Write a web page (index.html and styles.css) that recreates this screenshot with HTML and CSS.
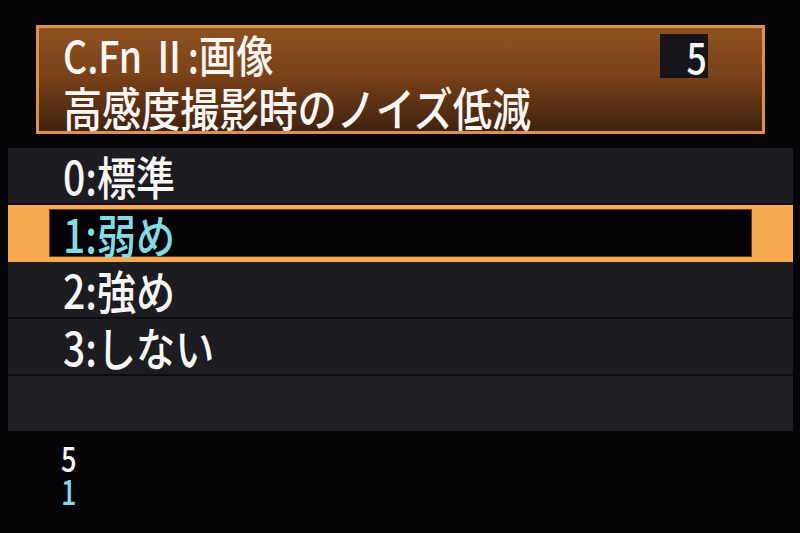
FILE: index.html
```html
<!DOCTYPE html>
<html lang="ja">
<head>
<meta charset="utf-8">
<link rel="stylesheet" href="styles.css">
</head>
<body>
<div class="screen">
  <div class="header">
    <div class="hline1">
      <span class="txt">C.Fn Ⅱ:画像</span>
      <span class="numbox"><span class="num">5</span></span>
    </div>
    <div class="hline2"><span class="txt">高感度撮影時のノイズ低減</span></div>
  </div>
  <div class="list">
    <div class="row"><span class="txt">0:標準</span></div>
    <div class="row selected"><div class="inner"><span class="txt">1:弱め</span></div></div>
    <div class="row"><span class="txt">2:強め</span></div>
    <div class="row"><span class="txt">3:しない</span></div>
    <div class="row empty"></div>
  </div>
  <div class="footer">
    <span class="fnum">5</span>
    <span class="fnum cyan">1</span>
  </div>
</div>
</body>
</html>
```
FILE: styles.css
```css
html, body {
  margin: 0;
  padding: 0;
  background: #050508;
  width: 800px;
  height: 533px;
  overflow: hidden;
}
.screen {
  font-family: "Noto Sans CJK JP", "Noto Sans", sans-serif;
  font-weight: 500;
  color: #f8f6f4;
  display: flex;
  flex-direction: column;
  padding-top: 25px;
}
.txt {
  display: inline-block;
  transform: scaleX(0.85);
  transform-origin: left center;
  white-space: nowrap;
}
.header {
  margin-left: 36px;
  width: 729px;
  height: 109px;
  box-sizing: border-box;
  border: 3px solid #de9247;
  background: linear-gradient(180deg, #8e5122 0%, #7a4219 45%, #40220f 100%);
  padding: 0 0 0 24px;
  display: flex;
  flex-direction: column;
}
.hline1 {
  height: 48px;
  display: flex;
  align-items: center;
  justify-content: space-between;
  font-size: 44px;
  line-height: 48px;
  margin-top: 2px;
}
.hline2 {
  height: 50px;
  font-size: 46px;
  line-height: 50px;
  margin-top: 3px;
}
.numbox {
  width: 48px;
  height: 44px;
  background: #15151b;
  margin-right: 54px;
  display: flex;
  justify-content: flex-end;
  align-items: center;
  margin-top: 4px;
}
.num {
  font-size: 42px;
  line-height: 44px;
  transform: scaleX(0.85);
  transform-origin: right center;
  margin-right: 1px;
}
.list {
  margin-top: 14px;
  margin-left: 8px;
  width: 785px;
  background: #1c1c21;
  display: flex;
  flex-direction: column;
}
.row {
  height: 55px;
  border-bottom: 2px solid #0e0e12;
  display: flex;
  align-items: center;
  padding-left: 55px;
  font-size: 46px;
  line-height: 55px;
}
.row.selected {
  background: #f7a94d;
  padding: 4px 41px 5px 41px;
  height: 57px;
  box-sizing: border-box;
  border-bottom: none;
}
.inner {
  flex: 1;
  height: 48px;
  box-sizing: border-box;
  background: #050306;
  border: 1px solid #6a3a1c;
  display: flex;
  align-items: center;
  padding-left: 13px;
  color: #84dbe6;
}
.row.empty {
  border-bottom: none;
  background: #1f1f24;
}
.footer {
  margin-top: 10px;
  margin-left: 61px;
  display: flex;
  flex-direction: column;
  font-size: 34px;
  line-height: 33px;
}
.fnum {
  display: inline-block;
  transform: scaleX(0.8);
  transform-origin: left center;
}
.cyan {
  color: #84dbe6;
}
```
